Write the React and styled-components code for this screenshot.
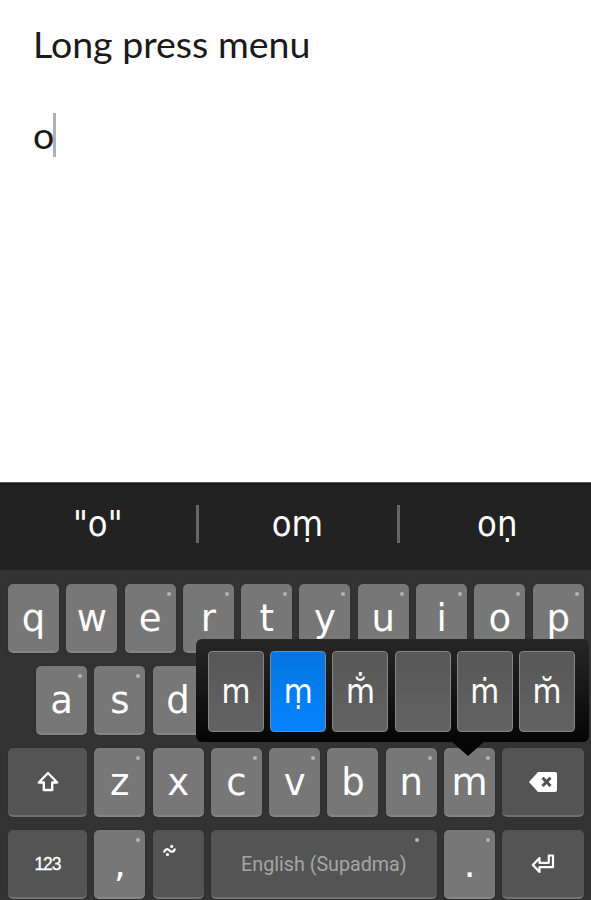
import React from 'react';
import styled, { createGlobalStyle } from 'styled-components';

const GlobalStyle = createGlobalStyle`
  * {
    box-sizing: border-box;
  }

  body {
    margin: 0;
    background: #fefefe;
    overflow: hidden;
  }
`;

const Screen = styled.div`
  width: 591px;
  height: 900px;
  display: flex;
  flex-direction: column;
  background: #fefefe;
`;

const Note = styled.div`
  height: 482px;
  padding: 22px 33px;
  display: flex;
  flex-direction: column;
  gap: 47px;
  font-family: 'Lato', sans-serif;
  font-size: 37.5px;
  line-height: 44px;
  color: #1a1a1a;
`;

const Title = styled.div`
  white-space: nowrap;
`;

const Typed = styled.div`
  display: flex;
  align-items: center;
`;

const Caret = styled.span`
  width: 3px;
  height: 44px;
  margin-left: -1px;
  background: #b0b0b0;
`;

const Suggestions = styled.div`
  height: 88px;
  display: flex;
  align-items: center;
  background: #222222;
  border-top: 1px solid #5c5c5c;
  box-shadow: inset 0 2px 0 #181818;
`;

const Word = styled.div`
  flex: ${(props) => (props.$width ? 'none' : 1)};
  width: ${(props) => props.$width}px;
  display: flex;
  align-items: center;
  justify-content: center;
  padding: 0 0 5px ${(props) => (props.$width ? 0 : 4)}px;
  font-family: 'DejaVu Sans Condensed', 'DejaVu Sans', sans-serif;
  font-stretch: condensed;
  font-size: 36px;
  line-height: 1;
  color: #ffffff;
`;

const Divider = styled.div`
  width: 3px;
  height: 38px;
  margin-top: -5px;
  background: #666666;
`;

const Keyboard = styled.div`
  position: relative;
  height: 330px;
  padding: 14px 7px 1px 8px;
  display: flex;
  flex-direction: column;
  gap: 13px;
  background: #333333;
`;

const Row = styled.div`
  display: flex;
  gap: 7.3px;
  height: 69px;
  padding-left: ${(props) => props.$indent || 0}px;
`;

const Key = styled.div`
  position: relative;
  flex: none;
  width: ${(props) => props.$width || 51}px;
  height: 69px;
  display: flex;
  align-items: center;
  justify-content: center;
  padding-top: 1px;
  border-radius: 5px;
  border-bottom: 2px solid ${(props) => (props.$dark ? '#717171' : '#858585')};
  background: ${(props) => (props.$dark ? '#545454' : '#777777')};
  box-shadow: 0 0 2px #2a2a2a;
  font-family: 'DejaVu Sans', sans-serif;
  font-size: 37px;
  line-height: 1;
  color: #ffffff;
`;

const Hint = styled.span`
  position: absolute;
  top: 8px;
  right: ${(props) => props.$right || 5}px;
  width: 4px;
  height: 4px;
  border-radius: 2px;
  background: #b4b4b4;
`;

const Small = styled.span`
  padding-top: 2px;
  font-family: 'Liberation Sans', sans-serif;
  font-size: 17.5px;
  letter-spacing: -1px;
  -webkit-text-stroke: 0.3px #ffffff;
`;

const SpaceLabel = styled.span`
  padding-top: 1px;
  font-family: 'Roboto', sans-serif;
  font-size: 19.7px;
  color: #a6a6a6;
`;

const Corner = styled.span`
  align-self: flex-start;
  display: flex;
  margin: 13px 18px 0 0;
`;

const Popup = styled.div`
  position: absolute;
  left: 195.5px;
  top: 69px;
  width: 393.5px;
  height: 103px;
  padding: 12px 12.5px;
  display: flex;
  gap: 6.2px;
  border-radius: 6px;
  background: linear-gradient(#272727, #050505);
`;

const Choice = styled.div`
  flex: none;
  width: 56px;
  height: 81px;
  display: flex;
  align-items: center;
  justify-content: center;
  border: 1px solid #858585;
  border-radius: 4px;
  background: ${(props) =>
    props.$active ? 'linear-gradient(#0376e0, #0583ff)' : 'linear-gradient(#585858, #626262)'};
  font-family: 'DejaVu Sans Condensed', 'DejaVu Sans', sans-serif;
  font-stretch: condensed;
  font-size: 33px;
  line-height: 1;
  color: #ffffff;
`;

const Pointer = styled.div`
  position: absolute;
  left: 451px;
  top: 171px;
  width: 34px;
  height: 15px;
  background: #050505;
  clip-path: polygon(0 0, 100% 0, 50% 100%);
`;

const ShiftIcon = () => (
  <svg width="24" height="22" viewBox="0 0 24 22" fill="none" stroke="#fff" strokeWidth="2.4" strokeLinejoin="round">
    <path d="M12 2 L21.2 11.5 H16.2 V19 H7.8 V11.5 H2.8 Z" />
  </svg>
);

const DeleteIcon = () => (
  <svg width="28" height="20" viewBox="0 0 28 20">
    <path d="M9 0 H26 Q28 0 28 2 V18 Q28 20 26 20 H9 L0 10 Z" fill="#fff" />
    <path d="M13.5 5.8 L21.5 14 M21.5 5.8 L13.5 14" stroke="#505050" strokeWidth="3" />
  </svg>
);

const EnterIcon = () => (
  <svg width="24" height="20" viewBox="0 0 24 20" fill="none" stroke="#fff" strokeWidth="2.2" strokeLinejoin="round">
    <path d="M1.8 11 L8.5 4 V8.8 H17.8 V1.5 H22 V13.2 H8.5 V18 Z" />
  </svg>
);

const TildeIcon = () => (
  <svg width="13" height="13" viewBox="0 0 13 13" fill="none" stroke="#fff" strokeWidth="2.3">
    <path d="M1 8.5 C2 4.5 4.5 4.5 6.5 6.5 C8.5 8.5 11 8 12 4.5" />
    <circle cx="8.7" cy="2.4" r="1.6" fill="#fff" stroke="none" />
    <circle cx="4.5" cy="10.5" r="1.6" fill="#fff" stroke="none" />
  </svg>
);

const letters = (text, hinted) =>
  text.split('').map((char) => (
    <Key key={char}>
      {char}
      {hinted.includes(char) && <Hint />}
    </Key>
  ));

const choices = ['m', 'ṃ', 'm̐', '', 'ṁ', 'm̆'];

const App = () => {
  return (
    <>
      <GlobalStyle />
      <Screen>
        <Note>
          <Title>Long press menu</Title>
          <Typed>
            o<Caret />
          </Typed>
        </Note>
        <Suggestions>
          <Word $width={195.5}>"o"</Word>
          <Divider />
          <Word $width={198}>oṃ</Word>
          <Divider />
          <Word>oṇ</Word>
        </Suggestions>
        <Keyboard>
          <Row>{letters('qwertyuiop', 'ertyuiop')}</Row>
          {/* the rest of this row sits under the open popup */}
          <Row $indent={28}>{letters('asd', 'as')}</Row>
          <Row>
            <Key $dark $width={79}>
              <ShiftIcon />
            </Key>
            {letters('zxcvbnm', 'zcvnm')}
            <Key $dark $width={82}>
              <DeleteIcon />
            </Key>
          </Row>
          <Row>
            <Key $dark $width={79}>
              <Small>123</Small>
            </Key>
            <Key>
              ,<Hint />
            </Key>
            <Key $dark>
              <Corner>
                <TildeIcon />
              </Corner>
            </Key>
            <Key $dark $width={226}>
              <SpaceLabel>English (Supadma)</SpaceLabel>
              <Hint $right={18} />
            </Key>
            <Key>
              .<Hint />
            </Key>
            <Key $dark $width={82}>
              <EnterIcon />
            </Key>
          </Row>
          <Popup>
            {choices.map((choice, index) => (
              <Choice key={index} $active={index === 1}>
                {choice}
              </Choice>
            ))}
          </Popup>
          <Pointer />
        </Keyboard>
      </Screen>
    </>
  );
};

export default App;
